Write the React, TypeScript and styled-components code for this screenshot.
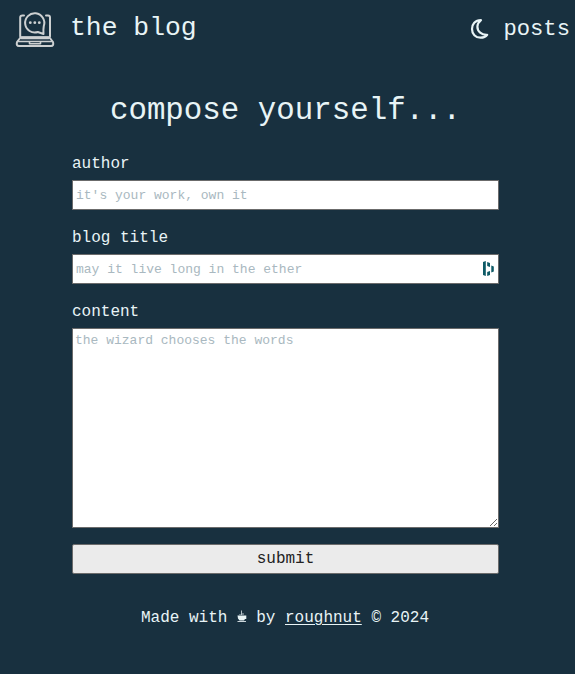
import React from "react";
import styled, { createGlobalStyle } from "styled-components";

const GlobalStyle = createGlobalStyle`
  * { box-sizing: border-box; }
  body {
    margin: 0;
    background: #18303f;
    color: #e8f4f6;
    font-family: "Liberation Mono", "Courier New", monospace;
    font-size: 16px;
  }
`;

const Page = styled.div`
  min-height: 674px;
  display: flex;
  flex-direction: column;
`;

const Header = styled.header`
  display: flex;
  align-items: center;
  justify-content: space-between;
  height: 58px;
  padding: 0 5px 0 15px;
`;

const Brand = styled.div`
  display: flex;
  align-items: center;
  gap: 15px;
`;

const BrandName = styled.span`
  font-size: 26.4px;
  line-height: 30px;
  margin-top: -3px;
`;

const Nav = styled.nav`
  display: flex;
  align-items: center;
  gap: 14px;
`;

const NavLink = styled.a`
  font-size: 22.2px;
  line-height: 28px;
  padding-top: 1px;
`;

const Title = styled.h1`
  margin: 35px 4px 0 0;
  font-size: 30.8px;
  font-weight: 400;
  line-height: 36px;
  text-align: center;
`;

const Form = styled.form`
  width: 427px;
  margin: 25px 0 0 72px;
  display: flex;
  flex-direction: column;
`;

const Label = styled.label`
  height: 26px;
  line-height: 20px;
`;

const Field = styled.div`
  position: relative;
  height: 30px;
  margin-bottom: 18px;
`;

const Input = styled.input`
  display: block;
  width: 100%;
  height: 30px;
  padding: 1px 3px;
  border: 1px solid #6b6b6b;
  border-radius: 0;
  background: #fff;
  font: 13px "Liberation Mono", monospace;
  &::placeholder { color: #a9b8c0; }
`;

const FieldBadge = styled.svg`
  position: absolute;
  right: 4px;
  top: 7px;
`;

const TextArea = styled.textarea`
  display: block;
  width: 100%;
  height: 200px;
  padding: 4px 2px;
  border: 1px solid #6b6b6b;
  background: #fff;
  font: 13px "Liberation Mono", monospace;
  &::placeholder { color: #a9b8c0; }
`;

const Submit = styled.button`
  height: 30px;
  margin-top: 16px;
  padding: 0 0 1px;
  border: 1px solid #6b6b6b;
  border-radius: 2px;
  background: #ebebeb;
  color: #222;
  font: 16px "Liberation Mono", monospace;
`;

const Footer = styled.footer`
  display: flex;
  justify-content: center;
  margin: 34px 5px 0 0;
  line-height: 20px;
  white-space: pre;
`;

const AuthorLink = styled.a`
  text-decoration: underline;
  text-decoration-thickness: 1px;
  text-underline-offset: 2px;
`;

const Cup = styled.svg`
  margin-top: 2px;
`;

const LogoIcon = () => (
  <svg width="40" height="38" viewBox="0 0 40 38" fill="none" stroke="#cdd0d1" strokeWidth="2" strokeLinejoin="round" strokeLinecap="round">
    <path d="M9 5.500H7.500Q5.200 5.500 5.200 7.500V26.500M35 26.500V7.500Q35 5.500 33 5.500H31" />
    <path d="M28.500 24L22.800 22A9.600 9.600 0 1 1 28.800 16Q28.200 19 28.500 24Z" />
    <path d="M5.500 27.500L2 32Q1 36 4 36H36Q39 36 38 32L34.500 27.500Z" />
    <path d="M3 31.500H37M14.500 32V33.800H25.500V32" strokeWidth="1.600" />
    <path d="M6.500 27.800H33.500" strokeWidth="3" />
    <g fill="#cdd0d1" stroke="none">
      <circle cx="15.300" cy="12.700" r="1.400" />
      <circle cx="19.800" cy="12.700" r="1.400" />
      <circle cx="24.300" cy="12.700" r="1.400" />
    </g>
  </svg>
);

const MoonIcon = () => (
  <svg width="19" height="22" viewBox="0 0 19 22" fill="none">
    <path d="M11 2.100C5 2.100 2 6.300 2 11C2 15.900 5.500 19.700 10.500 19.700C13.300 19.700 15.700 18.800 17.200 16.800C11.500 17.200 7.400 13.500 7.400 8.800C7.400 6 8.900 3.700 11 2.100Z" stroke="#e8f4f6" strokeWidth="2.200" strokeLinejoin="round" />
  </svg>
);

export default function App() {
  return (
    <>
      <GlobalStyle />
      <Page>
        <Header>
          <Brand>
            <LogoIcon />
            <BrandName>the blog</BrandName>
          </Brand>
          <Nav>
            <MoonIcon />
            <NavLink>posts</NavLink>
          </Nav>
        </Header>
        <Title>compose yourself...</Title>
        <Form>
          <Label htmlFor="author">author</Label>
          <Field>
            <Input id="author" placeholder="it's your work, own it" />
          </Field>
          <Label htmlFor="title">blog title</Label>
          <Field>
            <Input id="title" placeholder="may it live long in the ether" />
            <FieldBadge width="12" height="16" viewBox="0 0 12 16" fill="#0e5a66">
              <path d="M0 1L2.800 0V15L0 14ZM4.200 1L7 2V6L4.200 5ZM4.200 11L7 10V14L4.200 15ZM8.300 4.500L10.800 5.500V10.500L8.300 11.500Z" />
            </FieldBadge>
          </Field>
          <Label htmlFor="content">content</Label>
          <TextArea id="content" placeholder="the wizard chooses the words" />
          <Submit type="button">submit</Submit>
        </Form>
        <Footer>
          <span>Made with </span>
          <Cup width="9.600" height="14" viewBox="0 0 9.600 14">
            <path d="M4.500 0.500V5M6 3V5M3 4V5" stroke="#b5c3c9" strokeWidth="1" />
            <path d="M0.500 5.500H9.300V9H8L7 10.500H2.500L1 8.500Z" fill="#e8f4f6" />
            <path d="M0.500 11.500H9" stroke="#d0dade" />
          </Cup>
          <span> by </span>
          <AuthorLink>roughnut</AuthorLink>
          <span> © 2024</span>
        </Footer>
      </Page>
    </>
  );
}
